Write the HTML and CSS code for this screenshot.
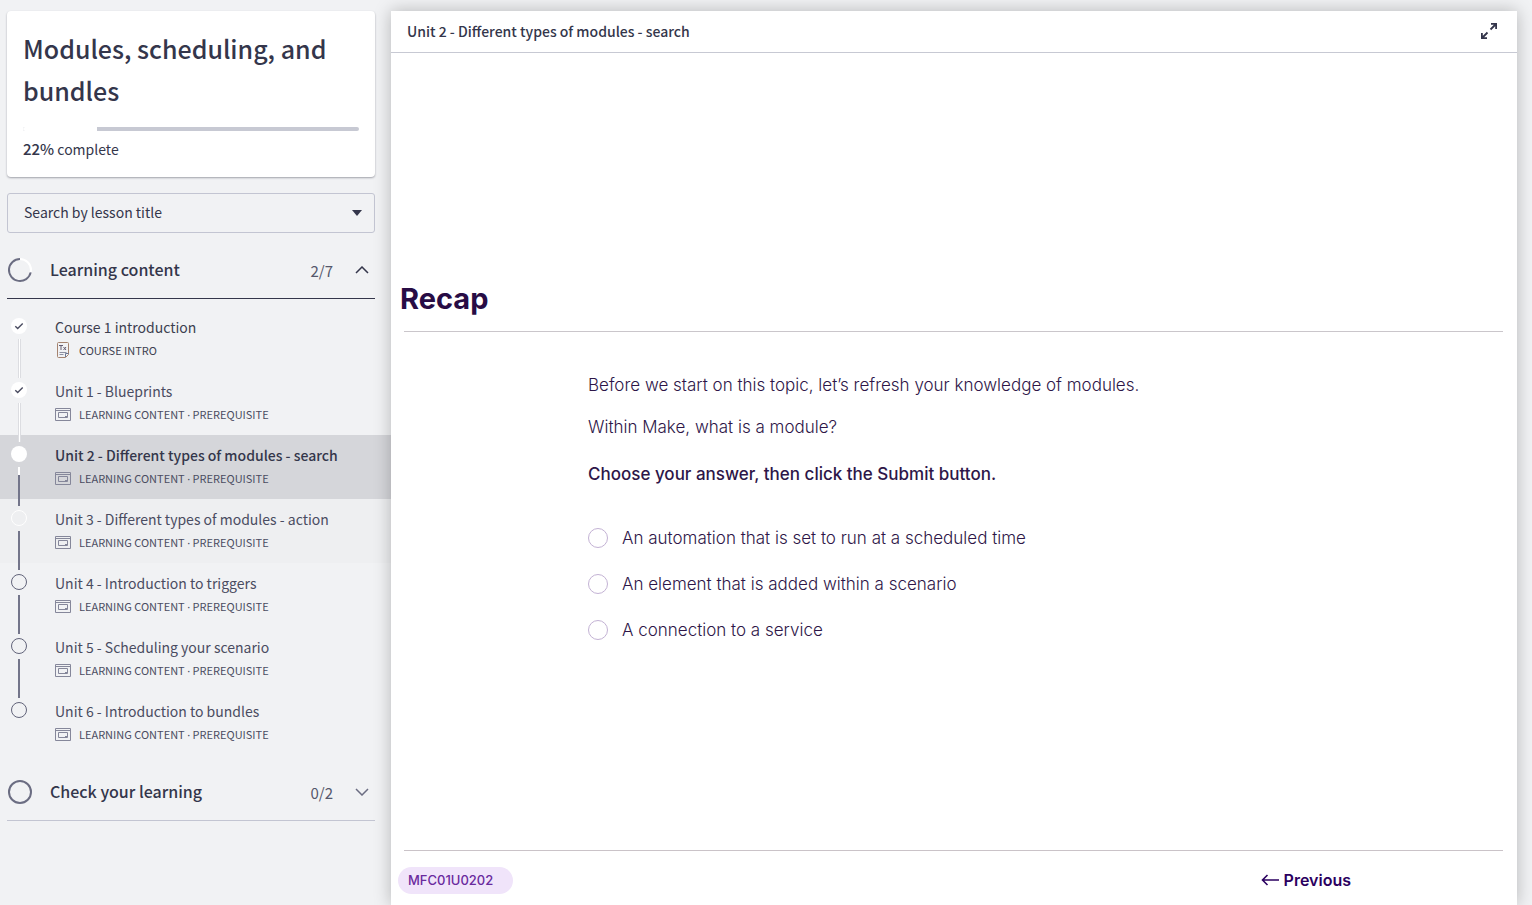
FILE: index.html
```html
<!DOCTYPE html>
<html lang="en">
<head>
<meta charset="utf-8">
<meta name="viewport" content="width=device-width, initial-scale=1">
<title>Modules, scheduling, and bundles</title>
<link rel="stylesheet" href="styles.css">
</head>
<body>
<svg class="sprite" aria-hidden="true">
  <symbol id="lesson" viewBox="0 0 16 13">
    <path d="M.5.5h15v12H.5zM.5 2.500h15M3.500 4.500h9v5h-9zM12 8.500h-2" fill="none" stroke="currentColor"/>
  </symbol>
  <symbol id="check" viewBox="0 0 16 16">
    <path d="M4.300 8.200l2.400 2.300 5-5" fill="none" stroke="currentColor" stroke-width="1.400"/>
  </symbol>
</svg>
<div class="layout">
  <aside class="sidebar">
    <section class="card">
      <h1 class="card-title">Modules, scheduling, and bundles</h1>
      <div class="progress" role="progressbar" aria-valuenow="22" aria-valuemin="0" aria-valuemax="100" aria-label="Course progress"><div class="progress-done" style="width:22%"></div></div>
      <p class="card-status"><strong>22%</strong> complete</p>
    </section>
    <div class="search">
      <select class="search-select" aria-label="Search by lesson title"><option>Search by lesson title</option></select>
      <svg class="search-arrow" width="10" height="6" viewBox="0 0 10 6" aria-hidden="true"><path d="M0 0h10L5 6z" fill="currentColor"/></svg>
    </div>
    <button class="section section-open" type="button" aria-expanded="true">
      <svg width="26" height="26" viewBox="0 0 26 26" fill="none" stroke-width="2" aria-hidden="true"><circle cx="13" cy="13" r="11" stroke="#fff"/><path d="M13 2a11 11 0 1 0 10.700 13.400" stroke="#6b6d82"/></svg>
      <span class="section-name">Learning content</span>
      <span class="section-count">2/7</span>
      <svg class="chevron" width="14" height="8" viewBox="0 0 14 8" aria-hidden="true"><path d="M1 7l6-6 6 6" fill="none" stroke="currentColor" stroke-width="1.500"/></svg>
    </button>
    <nav class="lessons" aria-label="Lessons">
      <a class="lesson" href="#intro">
        <span class="rail"><i class="seg seg-top"></i><span class="dot dot-full"><svg width="16" height="16"><use href="#check"/></svg></span><i class="seg seg-white"></i></span>
        <span class="lesson-text"><span class="lesson-name lesson-dark">Course 1 introduction</span>
        <span class="meta lesson-dark"><svg width="16" height="16" viewBox="0 0 16 16" fill="none" aria-hidden="true"><path d="M13.500 12.500V1.500a1 1 0 0 0-1-1h-9a1 1 0 0 0-1 1v13a1 1 0 0 0 1 1h7z" stroke="#a5836f"/><path d="M10.500 15v-3.500h3" stroke="#6b7894"/><path d="M4 3.500h4M6 3.500V8M8.500 5l2.500 3M11 5L8.500 8" stroke="#655e73"/><path d="M4.500 10.500h7M4.500 12.500h4" stroke="#8c8fa0"/></svg>COURSE INTRO</span></span>
      </a>
      <a class="lesson" href="#unit1">
        <span class="rail"><i class="seg seg-top seg-white"></i><span class="dot dot-full"><svg width="16" height="16"><use href="#check"/></svg></span><i class="seg seg-white"></i></span>
        <span class="lesson-text"><span class="lesson-name">Unit 1 - Blueprints</span>
        <span class="meta"><svg width="16" height="13"><use href="#lesson"/></svg><span>LEARNING CONTENT <span class="sep">·</span> PREREQUISITE</span></span></span>
      </a>
      <a class="lesson lesson-current" href="#unit2" aria-current="page">
        <span class="rail"><i class="seg seg-top seg-white"></i><span class="dot dot-full"></span><i class="seg seg-half"></i></span>
        <span class="lesson-text"><span class="lesson-name">Unit 2 - Different types of modules - search</span>
        <span class="meta"><svg width="16" height="13"><use href="#lesson"/></svg><span>LEARNING CONTENT <span class="sep">·</span> PREREQUISITE</span></span></span>
      </a>
      <a class="lesson lesson-next" href="#unit3">
        <span class="rail"><i class="seg seg-top seg-dark"></i><span class="dot dot-light"></span><i class="seg seg-dark"></i></span>
        <span class="lesson-text"><span class="lesson-name">Unit 3 - Different types of modules - action</span>
        <span class="meta"><svg width="16" height="13"><use href="#lesson"/></svg><span>LEARNING CONTENT <span class="sep">·</span> PREREQUISITE</span></span></span>
      </a>
      <a class="lesson" href="#unit4">
        <span class="rail"><i class="seg seg-top seg-dark"></i><span class="dot"></span><i class="seg seg-dark"></i></span>
        <span class="lesson-text"><span class="lesson-name">Unit 4 - Introduction to triggers</span>
        <span class="meta"><svg width="16" height="13"><use href="#lesson"/></svg><span>LEARNING CONTENT <span class="sep">·</span> PREREQUISITE</span></span></span>
      </a>
      <a class="lesson" href="#unit5">
        <span class="rail"><i class="seg seg-top seg-dark"></i><span class="dot"></span><i class="seg seg-dark"></i></span>
        <span class="lesson-text"><span class="lesson-name">Unit 5 - Scheduling your scenario</span>
        <span class="meta"><svg width="16" height="13"><use href="#lesson"/></svg><span>LEARNING CONTENT <span class="sep">·</span> PREREQUISITE</span></span></span>
      </a>
      <a class="lesson" href="#unit6">
        <span class="rail"><i class="seg seg-top seg-dark"></i><span class="dot"></span></span>
        <span class="lesson-text"><span class="lesson-name">Unit 6 - Introduction to bundles</span>
        <span class="meta"><svg width="16" height="13"><use href="#lesson"/></svg><span>LEARNING CONTENT <span class="sep">·</span> PREREQUISITE</span></span></span>
      </a>
    </nav>
    <button class="section" type="button" aria-expanded="false">
      <svg width="26" height="26" viewBox="0 0 26 26" fill="none" aria-hidden="true"><circle cx="13" cy="13" r="11" stroke="#6b6d82" stroke-width="2"/></svg>
      <span class="section-name">Check your learning</span>
      <span class="section-count">0/2</span>
      <svg class="chevron chevron-soft" width="14" height="8" viewBox="0 0 14 8" aria-hidden="true"><path d="M1 1l6 6 6-6" fill="none" stroke="currentColor" stroke-width="1.500"/></svg>
    </button>
  </aside>
  <main class="panel">
    <header class="panel-head">
      <h2 class="panel-title">Unit 2 - Different types of modules - search</h2>
      <button class="expand" type="button" aria-label="Full screen"><svg width="18" height="18" viewBox="0 0 18 18" fill="none" stroke="currentColor" stroke-width="1.800" aria-hidden="true"><path d="M10.500 7.500L16 2M11 1.900h5.100V7M7.500 10.500L2 16M1.900 11v5.100H7"/></svg></button>
    </header>
    <div class="slide">
      <div class="slide-head"><h3 class="slide-title">Recap</h3></div>
      <form class="question">
        <p class="line">Before we start on this topic, let’s refresh your knowledge of modules.</p>
        <p class="line">Within Make, what is a module?</p>
        <p class="prompt">Choose your answer, then click the Submit button.</p>
        <div class="options">
          <label class="option"><input class="radio" type="radio" name="answer">An automation that is set to run at a scheduled time</label>
          <label class="option"><input class="radio" type="radio" name="answer">An element that is added within a scenario</label>
          <label class="option"><input class="radio" type="radio" name="answer">A connection to a service</label>
        </div>
      </form>
      <footer class="slide-foot">
        <span class="code">MFC01U0202</span>
        <button class="previous" type="button"><svg width="18" height="12" viewBox="0 0 18 12" fill="none" stroke="currentColor" stroke-width="1.600" aria-hidden="true"><path d="M18 6H1.500M6.500 1l-5 5 5 5"/></svg>Previous</button>
      </footer>
    </div>
  </main>
</div>
</body>
</html>
```

FILE: styles.css
```css
* { box-sizing: border-box; }
body {
  margin: 0;
  background: #f1f2f4;
  color: #34364b;
  font-family: "Noto Sans CJK SC", "Noto Sans", sans-serif;
  font-size: 14px;
}
h1, h2, h3, p { margin: 0; }
button { border: 0; background: none; padding: 0; color: inherit; font: inherit; text-align: left; cursor: pointer; }
svg { display: block; flex: none; }
.sprite { position: absolute; width: 0; height: 0; }

.layout { display: flex; min-height: 100vh; padding: 11px 15px 0 0; }
.sidebar { flex: 0 0 391px; display: flex; flex-direction: column; }

.card {
  margin: 0 16px 0 7px;
  padding: 16px;
  background: #fff;
  border-radius: 4px;
  box-shadow: 0 1px 2px rgba(40, 42, 60, .4);
}
.card-title { font-size: 25px; font-weight: 500; line-height: 42px; }
.progress { height: 4px; margin-top: 16px; border-radius: 2px; background: #c7c9d3; overflow: hidden; }
.progress-done { height: 100%; background: #fff; }
.card-status { margin-top: 6px; line-height: 24px; }
.card-status strong { font-size: 15px; font-weight: 500; }

.search { position: relative; margin: 16px 16px 0 7px; }
.search-select {
  display: block;
  width: 100%;
  height: 40px;
  padding: 0 16px 2px;
  border: 1px solid #c3c5d2;
  border-radius: 3px;
  background: transparent;
  color: inherit;
  font: inherit;
  appearance: none;
}
.search-arrow { position: absolute; right: 13px; top: 17px; pointer-events: none; }

.section {
  display: flex;
  align-items: center;
  height: 57px;
  margin: 9px 16px 0 7px;
  border-bottom: 1px solid #c3c5d2;
}
.section-open { border-color: #34364b; }
.section-name { flex: 1; margin-left: 17px; padding-bottom: 2px; font-size: 16px; font-weight: 500; }
.section-count { color: #55576b; font-size: 15px; }
.chevron { margin: 0 6px 0 22px; }
.chevron-soft { color: #6b6d82; }

.lessons { display: flex; flex-direction: column; margin-top: 8px; }
.lesson { display: flex; height: 64px; color: #4a4c61; text-decoration: none; }
.lesson-current { background: #d5d6da; }
.lesson-current .lesson-name { color: #34364b; font-weight: 500; }
.lesson-next { background: #eeeff1; }
.rail { display: flex; flex-direction: column; align-items: center; width: 38px; margin-right: 17px; }
.seg { width: 2px; flex: 1; }
.seg-top { flex: none; height: 7px; }
.seg-white { width: 3px; background: #fff; border: solid #dcdde1; border-width: 0 1px; }
.seg-dark { background: #73758a; }
.seg-half { background: linear-gradient(#fff 8px, #73758a 8px); }
.dot { width: 16px; height: 16px; margin: 4px 0 5px; border: 1px solid #62647a; border-radius: 50%; }
.dot-full { border: 0; background: #fff; }
.dot-light { border-color: #fff; }
.lesson-text { display: flex; flex-direction: column; padding-top: 10px; }
.lesson-name { line-height: 21px; }
.meta { display: flex; align-items: center; gap: 8px; font-size: 11px; line-height: 24px; }
.meta svg { color: #85879a; }
.sep { font-family: "Noto Sans", sans-serif; line-height: 1; }
.lesson-dark { color: #3d3f50; }

.panel {
  position: relative;
  flex: 1;
  display: flex;
  flex-direction: column;
  background: #fff;
  box-shadow: 0 0 16px rgba(0, 0, 0, .25);
}
.panel-head {
  display: flex;
  align-items: center;
  justify-content: space-between;
  height: 42px;
  padding: 0 19px 2px 16px;
  border-bottom: 1px solid #c7c9d3;
}
.panel-title { font-size: 14px; font-weight: 500; }

.slide { flex: 1; display: flex; flex-direction: column; color: #2e1648; font-family: Inter, sans-serif; }
.slide-head {
  margin: 226px 14px 0 13px;
  padding-bottom: 12px;
  border-bottom: 1px solid #cac6cb;
}
.slide-title {
  margin-left: -4px;
  color: #280c45;
  font-size: 29px;
  font-weight: 700;
  line-height: 40px;
}
.question { padding: 40px 16px 16px 197px; font-size: 17px; font-weight: 300; }
.line { margin-bottom: 16px; line-height: 26px; }
.prompt { margin-top: 21px; line-height: 26px; font-weight: 500; }
.options { display: grid; gap: 20px; margin-top: 38px; }
.option { display: flex; align-items: center; gap: 14px; line-height: 26px; }
.radio { appearance: none; width: 20px; height: 20px; margin: 0; border: 1px solid #c3b2d4; border-radius: 50%; background: #fff; }
.radio:checked { border: 6px solid #6d2f9c; }
.slide-foot {
  display: flex;
  align-items: center;
  justify-content: space-between;
  height: 55px;
  margin: auto 14px 0 13px;
  padding: 4px 152px 0 0;
  border-top: 1px solid #cac3c8;
}
.code {
  margin-left: -6px;
  padding: 0 20px 0 10px;
  border-radius: 14px;
  background: #f0e4fa;
  color: #6a2a9e;
  font-size: 13px;
  font-weight: 500;
  line-height: 27px;
}
.previous { display: flex; align-items: center; gap: 5px; color: #2b0060; font-size: 16px; font-weight: 600; }
```
